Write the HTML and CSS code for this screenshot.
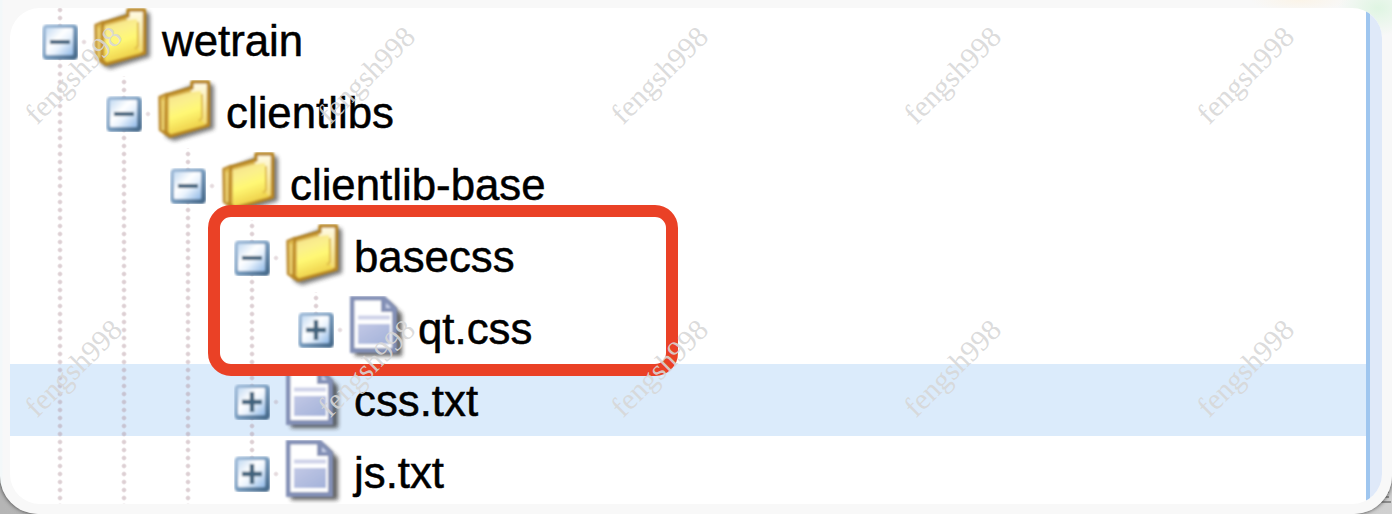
FILE: index.html
```html
<!DOCTYPE html>
<html lang="en">
<head>
<meta charset="utf-8">
<title>Repository tree</title>
<link rel="stylesheet" href="styles.css">
</head>
<body>
<svg class="defs" aria-hidden="true">
  <defs>
    <linearGradient id="boxFace" x1="0" y1="0" x2="1" y2="1"><stop offset="0" stop-color="#c3daf2"/><stop offset=".4" stop-color="#ffffff"/><stop offset=".6" stop-color="#eaf3fd"/><stop offset="1" stop-color="#8fb8e6"/></linearGradient>
    <linearGradient id="boxEdge" x1="0" y1="0" x2="1" y2="1"><stop offset="0" stop-color="#a3bedb"/><stop offset=".45" stop-color="#7fa2c4"/><stop offset="1" stop-color="#3f6283"/></linearGradient>
    <linearGradient id="gold" x1="0" y1="0" x2=".3" y2="1"><stop offset="0" stop-color="#f3dc8c"/><stop offset=".35" stop-color="#fbf08c"/><stop offset=".6" stop-color="#fff874"/><stop offset="1" stop-color="#eed04a"/></linearGradient>
    <linearGradient id="tab" x1="0" y1="0" x2="0" y2="1"><stop offset="0" stop-color="#fffbe8"/><stop offset=".35" stop-color="#fbf0b4"/><stop offset="1" stop-color="#f0d24c"/></linearGradient>
    <linearGradient id="side" x1="0" y1="0" x2="0" y2="1"><stop offset="0" stop-color="#e2be50"/><stop offset="1" stop-color="#c6962a"/></linearGradient>
    <linearGradient id="pageInk" x1="0" y1="0" x2="1" y2="1"><stop offset="0" stop-color="#c2c8e5"/><stop offset="1" stop-color="#a3b2da"/></linearGradient>
    <filter id="soft" x="-10%" y="-10%" width="120%" height="120%"><feGaussianBlur stdDeviation=".9"/></filter>
    <filter id="shade" x="-20%" y="-20%" width="140%" height="140%"><feGaussianBlur stdDeviation="2.3"/></filter>
    <symbol id="minus" viewBox="0 0 36 36">
      <g filter="url(#soft)"><rect x=".5" y=".5" width="35.5" height="35.5" rx="4.5" fill="url(#boxEdge)"/>
      <rect x="4" y="4" width="27" height="27" rx="1" fill="url(#boxFace)"/>
      <rect x="8" y="16" width="20" height="4" fill="#3f627b"/></g>
    </symbol>
    <symbol id="plus" viewBox="0 0 36 36">
      <g filter="url(#soft)"><rect x=".5" y=".5" width="35.5" height="35.5" rx="4.5" fill="url(#boxEdge)"/>
      <rect x="4" y="4" width="27" height="27" rx="1" fill="url(#boxFace)"/>
      <path d="M8 18H28M18 8V28" stroke="#3f627b" stroke-width="4.4"/></g>
    </symbol>
    <symbol id="folder" viewBox="0 0 64 68">
      <path d="M8 17L39 4H55Q58 4 58 9V49L18 61L10 57Z" fill="#333" opacity=".65" filter="url(#shade)"/>
      <g filter="url(#soft)" stroke-linejoin="round">
        <path d="M3.5 17L11 14V55L4 50Z" fill="url(#side)" stroke="#c0923a" stroke-width="2.6"/>
        <path d="M11 15L36 8V2H52.500V45L14 56L10 52Z" fill="url(#tab)" stroke="#b98724" stroke-width="3.4"/>
        <path d="M13 18L35 12L45 11V38L49 45L15 54L12 50Z" fill="url(#gold)"/>
        <path d="M13 17L35 11" stroke="#dcb64d" stroke-width="2"/>
        <path d="M46 14V38L43 41" fill="none" stroke="#dfbc48" stroke-width="2"/>
        <path d="M7 20V50" stroke="#ecd373" stroke-width="2.5"/>
        <path d="M12 19V51" stroke="#d9af49" stroke-width="2"/>
      </g>
    </symbol>
    <symbol id="file" viewBox="0 0 64 68">
      <path d="M7 6H41L54 18V60H7Z" fill="#222" opacity=".7" filter="url(#shade)"/>
      <g filter="url(#soft)">
        <path d="M2 0H37L49 12V57H2Z" fill="#8390b6"/>
        <path d="M6.500 4.500H33V16H44V52H6.500Z" fill="#fff"/>
        <path d="M38 7L43 12H38Z" fill="#cbd3eb"/>
        <path d="M10 21.500H42" stroke="#cdd1e8" stroke-width="4"/>
        <rect x="10" y="28" width="32" height="20" fill="url(#pageInk)"/>
      </g>
    </symbol>
  </defs>
</svg>
<svg class="corner" viewBox="0 0 12 14"><path d="M1 1H8M2 6H8M0 11H10" stroke="#777" stroke-width="1.500"/></svg>
<div class="window">
  <main class="panel">
    <div class="tree">
      <div class="row"><div class="node through"><svg class="toggle"><use href="#minus"/></svg></div><svg class="icon"><use href="#folder"/></svg><span class="label">wetrain</span></div>
      <div class="row"><i class="guide"></i><div class="node through"><svg class="toggle"><use href="#minus"/></svg></div><svg class="icon"><use href="#folder"/></svg><span class="label">clientlibs</span></div>
      <div class="row"><i class="guide"></i><i class="guide"></i><div class="node through"><svg class="toggle"><use href="#minus"/></svg></div><svg class="icon"><use href="#folder"/></svg><span class="label">clientlib-base</span></div>
      <div class="row"><i class="guide"></i><i class="guide"></i><i class="guide"></i><div class="node through"><svg class="toggle"><use href="#minus"/></svg></div><svg class="icon"><use href="#folder"/></svg><span class="label">basecss</span></div>
      <div class="row"><i class="guide"></i><i class="guide"></i><i class="guide"></i><i class="guide"></i><div class="node"><svg class="toggle"><use href="#plus"/></svg></div><svg class="icon"><use href="#file"/></svg><span class="label">qt.css</span></div>
      <div class="row selected"><i class="guide"></i><i class="guide"></i><i class="guide"></i><div class="node through"><svg class="toggle"><use href="#plus"/></svg></div><svg class="icon"><use href="#file"/></svg><span class="label">css.txt</span></div>
      <div class="row"><i class="guide"></i><i class="guide"></i><i class="guide"></i><div class="node"><svg class="toggle"><use href="#plus"/></svg></div><svg class="icon"><use href="#file"/></svg><span class="label">js.txt</span></div>
    </div>
    <div class="divider"></div>
  </main>
</div>
<div class="highlight"></div>
<div class="marks">
  <span>fengsh998</span><span>fengsh998</span><span>fengsh998</span><span>fengsh998</span><span>fengsh998</span>
  <span>fengsh998</span><span>fengsh998</span><span>fengsh998</span><span>fengsh998</span><span>fengsh998</span>
</div>
</body>
</html>
```
FILE: styles.css
```css
* { box-sizing: border-box; }
body {
  margin: 0;
  width: 1392px;
  height: 514px;
  overflow: hidden;
  position: relative;
  background: linear-gradient(90deg, #b5b5b5, #d0d0d0);
  font-family: "Liberation Sans", Arial, sans-serif;
}
.defs { position: absolute; width: 0; height: 0; }
.corner { position: absolute; left: 1381px; top: 491px; width: 12px; height: 14px; }
.window {
  position: relative;
  height: 514px;
  padding: 8px 10px 10px;
  border-radius: 0 0 38px 38px;
  box-shadow: 0 0 4px #333;
  background:
    radial-gradient(ellipse 40px 28px at 1378px 8px, #dff5e2, transparent),
    radial-gradient(ellipse 50px 12px at 1300px 0, #fbf4e8, transparent),
    linear-gradient(90deg, #f3f8f9 2px, #f8f8f8 3px);
}
.panel {
  display: flex;
  height: 496px;
  border-radius: 30px;
  overflow: hidden;
  background: #fff;
}
.tree { width: 1356px; margin-top: -4px; }
.divider { width: 16px; background: #dfe9f9; border-left: 4px solid #9fc6ef; }
.row { display: flex; height: 72px; padding-left: 18px; }
.selected { background: #dbebfb; }
.guide, .node {
  width: 64px;
  flex: none;
  background: radial-gradient(circle at 4px 4px, rgba(170, 135, 145, .43) 0, rgba(170, 135, 145, .36) 1.4px, transparent 3px) 28px 2px / 8px 8px repeat-y;
}
.node {
  display: flex;
  align-items: center;
  padding: 4px 0 0 14px;
  background:
    radial-gradient(circle at 4px 4px, rgba(170, 135, 145, .35) 0, rgba(170, 135, 145, .25) 1.4px, transparent 3px) 52px 34px / 8px 8px no-repeat,
    radial-gradient(circle at 4px 4px, rgba(170, 135, 145, .43) 0, rgba(170, 135, 145, .36) 1.4px, transparent 3px) 28px 2px / 8px 8px repeat-y;
}
.node:not(.through) {
  background:
    radial-gradient(circle at 4px 4px, rgba(170, 135, 145, .35) 0, rgba(170, 135, 145, .25) 1.4px, transparent 3px) 52px 34px / 8px 8px no-repeat,
    linear-gradient(#fff, #fff) 0 50px / 64px 22px no-repeat,
    radial-gradient(circle at 4px 4px, rgba(170, 135, 145, .43) 0, rgba(170, 135, 145, .36) 1.4px, transparent 3px) 28px 2px / 8px 8px repeat-y;
}
.toggle { width: 36px; height: 36px; }
.icon { width: 64px; height: 68px; margin-top: 4px; flex: none; }
.label {
  margin-left: 6px;
  padding-top: 12px;
  font-size: 43.8px;
  line-height: 49px;
  color: #000;
  -webkit-text-stroke: .5px #000;
}
.highlight {
  position: absolute;
  left: 208px;
  top: 205px;
  width: 470px;
  height: 171px;
  border: 12px solid #ea4126;
  border-radius: 23px;
}
.marks {
  position: absolute;
  left: -73px;
  top: -72px;
  display: grid;
  grid-template-columns: repeat(5, 293px);
  grid-auto-rows: 293px;
  place-items: center;
}
.marks span {
  font: 29.5px/34px "Liberation Serif", "Times New Roman", serif;
  color: rgba(215, 215, 215, .9);
  transform: rotate(-45deg);
}
```
